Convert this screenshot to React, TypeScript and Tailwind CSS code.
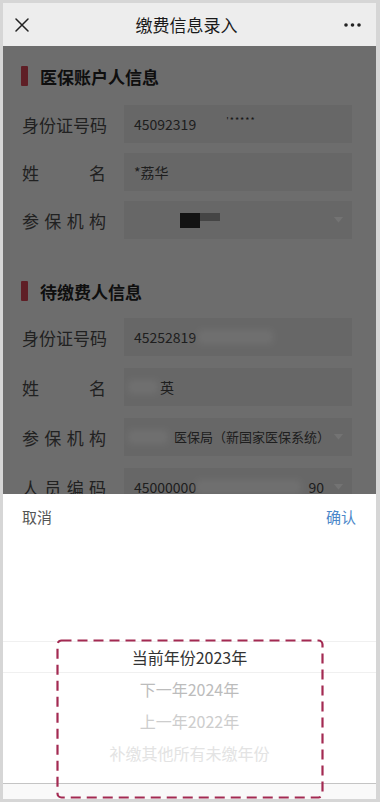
import React from "react";

const FONT = "font-['Noto_Sans_CJK_SC','Noto_Sans',sans-serif]";

function Label({ text }: { text: string }) {
  const chars = text.split("");
  return (
    <div className="flex w-[84px] shrink-0 justify-between text-[17px] leading-none text-[#4a4a4a]">
      {chars.map((c, i) => (
        <span key={i}>{c}</span>
      ))}
    </div>
  );
}

function Caret() {
  return (
    <svg width="9" height="6" viewBox="0 0 9 6" className="shrink-0">
      <path d="M0 0 H9 L4.5 5.5 Z" fill="#ffffff" />
    </svg>
  );
}

function Row({ label, children, className = "" }: { label: string; children?: React.ReactNode; className?: string }) {
  return (
    <div className={`flex items-center pl-[19px] pr-[24px] ${className}`}>
      <Label text={label} />
      <div className="ml-[18px] flex h-[38px] flex-1 items-center bg-[#e5e5e5] pl-[10px] pr-[9px] text-[14px] text-[#444]">
        {children}
      </div>
    </div>
  );
}

function SectionTitle({ title, className = "" }: { title: string; className?: string }) {
  return (
    <div className={`flex h-[20px] items-center gap-[12px] pl-[18px] ${className}`}>
      <div className="h-[20px] w-[7px] rounded-[1px] bg-[#d24654]" />
      <span className="text-[17px] font-bold leading-none text-[#222]">{title}</span>
    </div>
  );
}

function Smudge({ w }: { w: number }) {
  return <span className="h-[14px] shrink-0 rounded-sm bg-white/70 blur-[3px]" style={{ width: w }} />;
}

export default function App() {
  return (
    <div className={`relative h-[802px] w-[380px] overflow-hidden bg-[#d6d6d6] pl-[3px] pr-[4px] pt-[3px] ${FONT}`}>
      <div className="relative flex h-[780px] flex-col overflow-hidden bg-[#f2f2f2]">
        {/* Nav bar */}
        <header className="flex h-[43px] shrink-0 items-center justify-between bg-[#ededed] pl-[12px] pr-[15px]">
          <svg width="14" height="14" viewBox="0 0 14 14">
            <path d="M1 1 L13 13 M13 1 L1 13" stroke="#222" strokeWidth="1.5" strokeLinecap="round" />
          </svg>
          <span className="text-[17px] leading-none text-[#1a1a1a]">缴费信息录入</span>
          <svg width="17" height="4" viewBox="0 0 17 4">
            <circle cx="2" cy="2" r="1.8" fill="#222" />
            <circle cx="8.5" cy="2" r="1.8" fill="#222" />
            <circle cx="15" cy="2" r="1.8" fill="#222" />
          </svg>
        </header>

        {/* Form */}
        <main className="relative flex-1">
          <SectionTitle title="医保账户人信息" className="mt-[20px]" />
          <div className="mt-[19px] flex flex-col gap-[10px]">
            <Row label="身份证号码">
              <span>45092319</span>
              <span className="ml-[30px] -mt-[6px] text-[9px] tracking-[1px] text-[#333]">'*****</span>
            </Row>
            <Row label="姓名">
              <span>*荔华</span>
            </Row>
            <Row label="参保机构">
              <span className="ml-[46px] h-[15px] w-[20px] bg-[#2a2a2a]" />
              <span className="mb-[6px] h-[8px] w-[20px] bg-[#9a9a9a]" />
              <span className="flex-1" />
              <Caret />
            </Row>
          </div>

          <SectionTitle title="待缴费人信息" className="mt-[42px]" />
          <div className="mt-[17px] flex flex-col gap-[12px]">
            <Row label="身份证号码">
              <span>45252819</span>
              <span className="ml-[2px]" />
              <Smudge w={75} />
            </Row>
            <Row label="姓名">
              <span className="-ml-[6px]" />
              <Smudge w={30} />
              <span className="ml-[2px]">英</span>
            </Row>
            <Row label="参保机构">
              <span className="-ml-[6px]" />
              <Smudge w={40} />
              <span className="ml-[6px] text-[13px]">医保局（新国家医保系统）</span>
              <span className="flex-1" />
              <Caret />
            </Row>
            <Row label="人员编码">
              <span>45000000</span>
              <Smudge w={105} />
              <span className="flex-1" />
              <span className="mr-[10px]">90</span>
              <Caret />
            </Row>
          </div>

          <div className="absolute inset-0 bg-black/55" />

          {/* Bottom sheet */}
          <div className="absolute bottom-0 left-0 right-0 h-[289px] bg-white">
            <div className="flex h-[44px] items-center justify-between pl-[19px] pr-[20px] text-[15px] leading-none">
              <span className="text-[#555]">取消</span>
              <span className="text-[#4b87c9]">确认</span>
            </div>
            <div className="pt-[103px] text-center text-[16px] leading-none">
              <div className="flex h-[32px] items-center justify-center border-y border-[#f0f0f0] text-[#333]">当前年份2023年</div>
              <div className="flex h-[32px] items-center justify-center text-[#bcbcbc]">下一年2024年</div>
              <div className="flex h-[32px] items-center justify-center text-[#cdcdcd]">上一年2022年</div>
              <div className="flex h-[32px] items-center justify-center text-[#e3e3e3]">补缴其他所有未缴年份</div>
            </div>
          </div>
        </main>
      </div>
      <div className="h-[16px] border-t border-[#c4c4c4] bg-[#f9f9f9]" />

      {/* Annotation */}
      <svg className="absolute left-[56px] top-[639px]" width="268" height="161" viewBox="0 0 268 161">
        <rect x="1.5" y="1.5" width="265" height="157" rx="4" fill="none" stroke="#a32a52" strokeWidth="2.2" strokeDasharray="10 6" />
      </svg>
    </div>
  );
}
